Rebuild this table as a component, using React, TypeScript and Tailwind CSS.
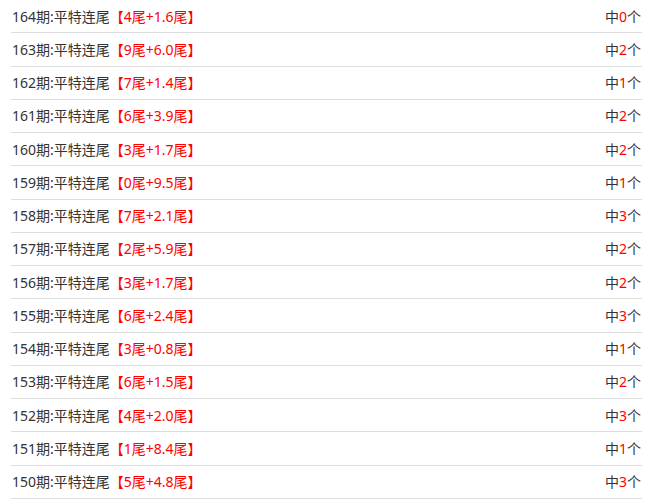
const rows: [number, string, number][] = [
  [164, '4尾+1.6尾', 0],
  [163, '9尾+6.0尾', 2],
  [162, '7尾+1.4尾', 1],
  [161, '6尾+3.9尾', 2],
  [160, '3尾+1.7尾', 2],
  [159, '0尾+9.5尾', 1],
  [158, '7尾+2.1尾', 3],
  [157, '2尾+5.9尾', 2],
  [156, '3尾+1.7尾', 2],
  [155, '6尾+2.4尾', 3],
  [154, '3尾+0.8尾', 1],
  [153, '6尾+1.5尾', 2],
  [152, '4尾+2.0尾', 3],
  [151, '1尾+8.4尾', 1],
  [150, '5尾+4.8尾', 3],
]

export default function App() {
  return (
    <div
      className="w-[650px] h-[502px] overflow-hidden bg-white text-[14px] text-[#333]"
      style={{ fontFamily: '"Noto Sans", "Noto Sans CJK SC", sans-serif' }}
    >
      <ul className="mx-[11px] w-[631px]">
        {rows.map(([issue, tail, hit]) => (
          <li
            key={issue}
            className="flex h-[33.25px] items-center justify-between border-b border-[#ddd] px-px"
          >
            <span>
              {issue}期:平特连尾
              <span className="text-[#f00]">【{tail}】</span>
            </span>
            <span>
              中<span className="text-[#f00]">{hit}</span>个
            </span>
          </li>
        ))}
      </ul>
    </div>
  )
}
